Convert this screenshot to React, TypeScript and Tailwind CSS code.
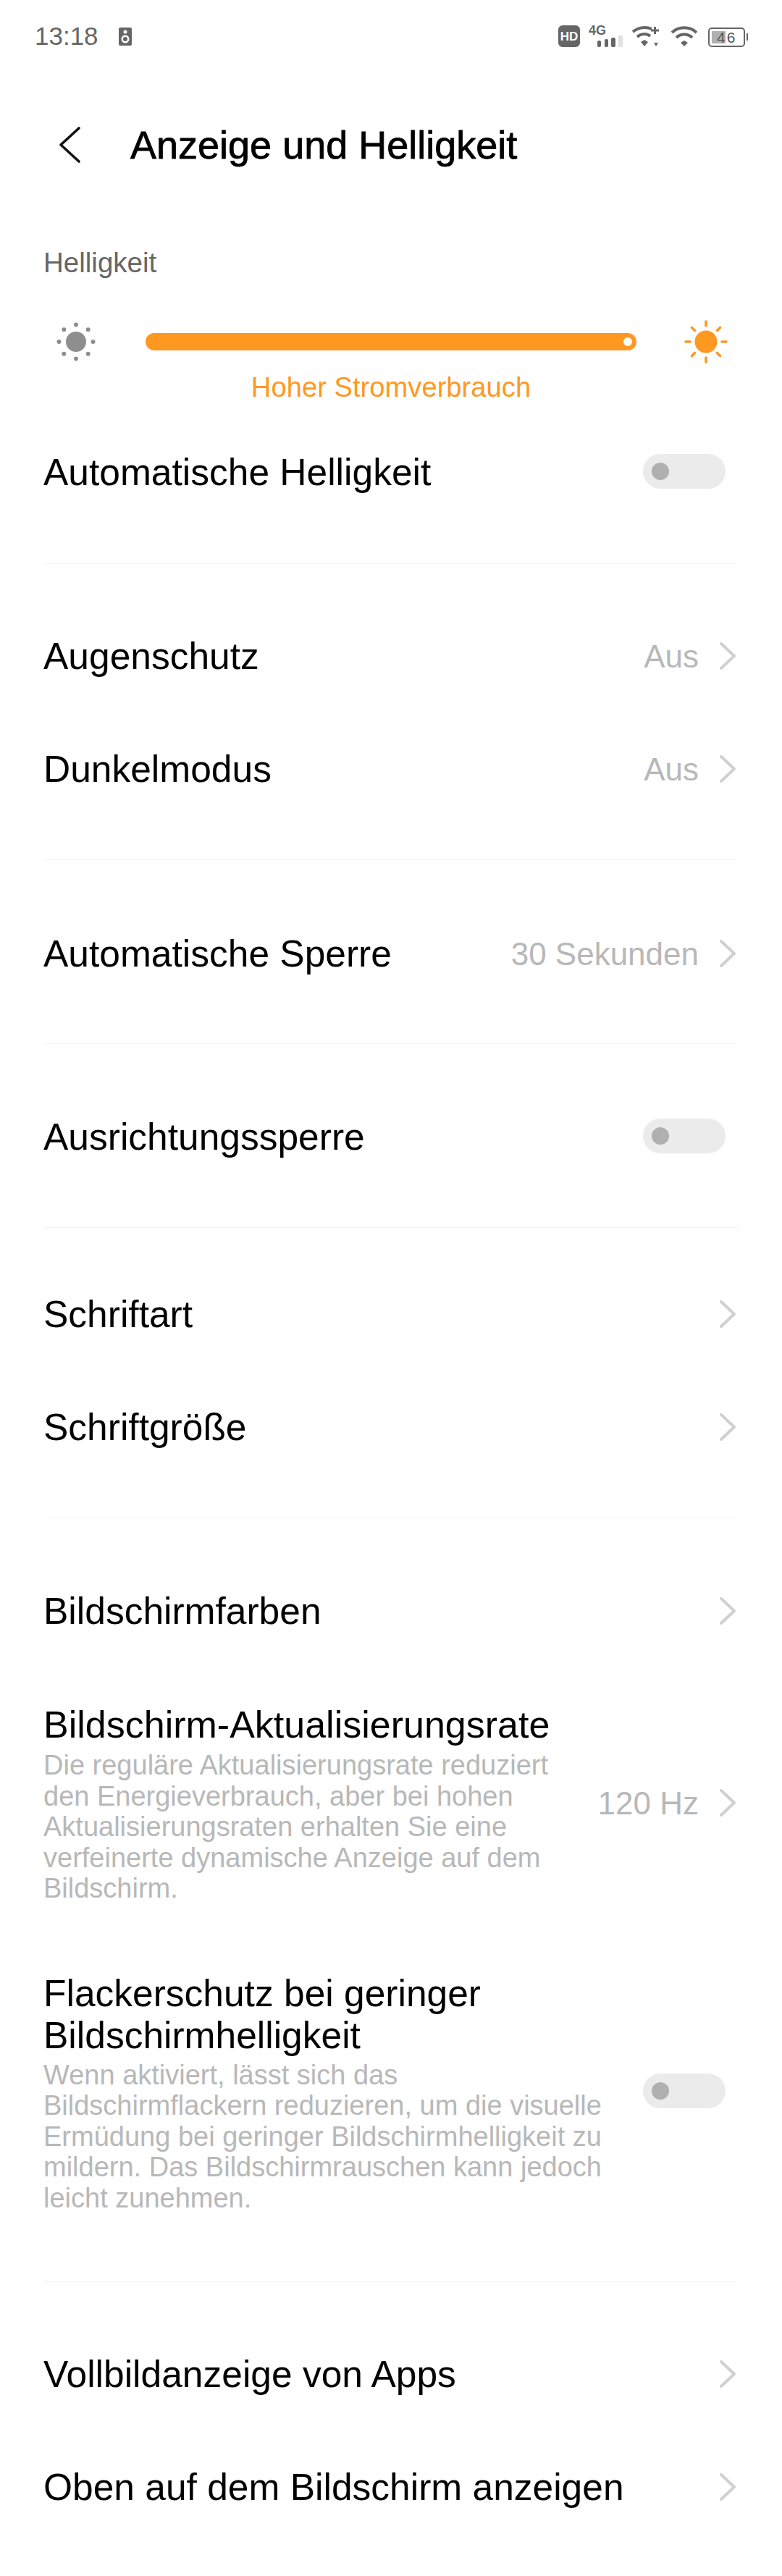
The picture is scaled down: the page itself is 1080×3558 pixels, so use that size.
import React from "react";

const Chevron = () => (
  <svg width="22" height="38" viewBox="0 0 22 38" fill="none" className="mr-[4px] mb-[2px] shrink-0">
    <path d="M2 2 L20 19 L2 36" stroke="#d0d0d0" strokeWidth="4" strokeLinecap="round" strokeLinejoin="round" />
  </svg>
);

const Toggle = () => (
  <div className="mb-1 mr-[18px] flex h-12 w-[114px] shrink-0 items-center rounded-full bg-[#ebebeb] pl-3">
    <div className="h-6 w-6 rounded-full bg-[#b0b0b0]" />
  </div>
);

const Divider = () => <div className="h-px bg-[#f4f4f4]" />;

function Row({ title, value, chevron = true, toggle = false }: { title: string; value?: string; chevron?: boolean; toggle?: boolean }) {
  return (
    <div className="flex h-[156px] items-center justify-between">
      <span className="text-[51.5px] text-black">{title}</span>
      {toggle ? (
        <Toggle />
      ) : (
        chevron && (
          <div className="flex items-center gap-[29px]">
            {value && <span className="text-[44px] text-[#b8b8b8]">{value}</span>}
            <Chevron />
          </div>
        )
      )}
    </div>
  );
}

const SunGray = () => (
  <svg width="54" height="54" viewBox="0 0 54 54" className="shrink-0">
    <circle cx="27" cy="27" r="14" fill="#8e8e8e" />
    {[[27, 3.5], [27, 50.5], [3.5, 27], [50.5, 27], [10.3, 10.3], [43.7, 10.3], [10.3, 43.7], [43.7, 43.7]].map(([x, y], i) => (
      <circle key={i} cx={x} cy={y} r="3" fill="#8e8e8e" />
    ))}
  </svg>
);

const SunOrange = () => (
  <svg width="60" height="60" viewBox="0 0 60 60" className="shrink-0">
    <circle cx="30" cy="30" r="15.5" fill="#ff9820" />
    <g stroke="#ff9820" strokeWidth="3.6" strokeLinecap="round">
      <path d="M30 2V8M30 52V58M2 30H8M52 30H58M10.5 10.5L14.5 14.5M49.5 10.5L45.5 14.5M10.5 49.5L14.5 45.5M49.5 49.5L45.5 45.5" />
    </g>
  </svg>
);

const StatusIcons = () => (
  <div className="flex items-center">
    <svg width="30" height="30" viewBox="0 0 30 30" className="mr-[12px] overflow-visible">
      <rect width="30" height="30" rx="6" fill="#666" />
      <text x="15" y="21" textAnchor="middle" fontSize="17" fontWeight="700" fill="#fff" fontFamily="Liberation Sans">HD</text>
    </svg>
    <div className="relative mr-[12px] h-[30px] w-[48px]">
      <span className="absolute left-0 top-[-3px] text-[18px] font-bold leading-[20px] text-[#666]">4G</span>
      <svg width="48" height="30" viewBox="0 0 48 30" className="absolute left-0 top-0">
        <rect x="12" y="21" width="5" height="9" rx="2" fill="#666" />
        <rect x="22" y="19" width="5" height="11" rx="2" fill="#666" />
        <rect x="31" y="17" width="6" height="13" rx="2" fill="#666" />
        <rect x="41" y="14" width="6" height="16" rx="1" fill="#e0e0e0" />
      </svg>
    </div>
    <svg width="38" height="30" viewBox="0 0 38 30" className="mr-[16px]">
      <g fill="none" stroke="#666" strokeWidth="4">
        <path d="M1 9C9 2 20 2 27 5" />
        <path d="M7 16C12 11 20 11 25 15" />
      </g>
      <path d="M12 23L17 20L22 23L17 29Z" fill="#666" />
      <path d="M26 7H37M31.5 2V12" stroke="#666" strokeWidth="3" />
      <path d="M30 24H36L33 29Z" fill="#666" />
    </svg>
    <svg width="36" height="30" viewBox="0 0 36 30" className="mr-[15px]">
      <g fill="none" stroke="#666" strokeWidth="4">
        <path d="M1 10C10 1 26 1 35 10" />
        <path d="M7 17C13 11 23 11 29 17" />
      </g>
      <path d="M13 24L18 21L23 24L18 29Z" fill="#666" />
    </svg>
    <div className="relative mt-[2px] flex h-[27px] w-[51px] items-center rounded-[5px] border-[2px] border-[#666]">
      <div className="absolute left-[3px] top-[3px] h-[17px] w-[19px] bg-[#b0b0b0]" />
      <span className="relative ml-[10px] text-[21px] font-light leading-none tracking-[2px] text-[#555]">46</span>
      <div className="absolute right-[-6px] top-[6px] h-[10px] w-[2px] bg-[#666]" />
    </div>
  </div>
);

export default function App() {
  return (
    <div className="h-[3558px] w-[1080px] overflow-hidden bg-white font-['Liberation_Sans',Arial,sans-serif]">
      <div className="flex h-[100px] items-center justify-between pl-[48px] pr-[51px]">
        <div className="flex items-center gap-[28px]">
          <span className="text-[35px] text-[#666]">13:18</span>
          <svg width="18" height="25" viewBox="0 0 18 25">
            <rect width="18" height="25" rx="2" fill="#666" />
            <circle cx="9" cy="6" r="2.5" fill="#fff" />
            <circle cx="9" cy="16" r="5.5" fill="#fff" />
            <circle cx="9" cy="16" r="3" fill="#666" />
          </svg>
        </div>
        <StatusIcons />
      </div>

      <div className="flex h-[200px] items-center pl-[81px]">
        <svg width="30" height="50" viewBox="0 0 30 50" fill="none">
          <path d="M28 2L3 25L28 48" stroke="#111" strokeWidth="3.6" strokeLinecap="round" strokeLinejoin="round" />
        </svg>
        <span className="ml-[69px] text-[54px] text-black [-webkit-text-stroke:0.8px_black]">Anzeige und Helligkeit</span>
      </div>

      <div className="px-[60px]">
        <div className="flex h-[124px] items-center pt-[2px] text-[38.5px] text-[#666]">Helligkeit</div>

        <div className="flex h-[96px] items-center">
          <div className="ml-[18px]"><SunGray /></div>
          <div className="relative ml-[69px] h-6 w-[678px] rounded-full bg-[#ff9820]">
            <div className="absolute right-[6px] top-[6px] h-3 w-3 rounded-full bg-white" />
          </div>
          <div className="ml-[66px]"><SunOrange /></div>
        </div>

        <div className="flex h-[26px] items-center justify-center pt-[3px] text-[38.2px] text-[#ff9820]">Hoher Stromverbrauch</div>

        <div className="mt-[29px]"><Row title="Automatische Helligkeit" toggle /></div>
        <div className="mt-[47px]"><Divider /></div>

        <div className="mt-[50px]">
          <Row title="Augenschutz" value="Aus" />
          <Row title="Dunkelmodus" value="Aus" />
        </div>
        <div className="mt-[46px]"><Divider /></div>

        <div className="mt-[52px]"><Row title="Automatische Sperre" value="30 Sekunden" /></div>
        <div className="mt-[45px]"><Divider /></div>

        <div className="mt-[51px]"><Row title="Ausrichtungssperre" toggle /></div>
        <div className="mt-[46px]"><Divider /></div>

        <div className="mt-[42px]">
          <Row title="Schriftart" />
          <Row title="Schriftgröße" />
        </div>
        <div className="mt-[46px]"><Divider /></div>

        <div className="mt-[51px]"><Row title="Bildschirmfarben" /></div>

        <div className="mt-[48px] flex items-center justify-between">
          <div className="w-[712px]">
            <div className="text-[52px] leading-[60px] text-black">Bildschirm-Aktualisierungsrate</div>
            <div className="mt-[5px] text-[38px] leading-[42.5px] text-[#b8b8b8]">
              Die reguläre Aktualisierungsrate reduziert den Energieverbrauch, aber bei hohen Aktualisierungsraten erhalten Sie eine verfeinerte dynamische Anzeige auf dem Bildschirm.
            </div>
          </div>
          <div className="flex items-center gap-[29px]">
            <span className="text-[44px] text-[#b8b8b8]">120 Hz</span>
            <Chevron />
          </div>
        </div>

        <div className="mt-[94px] flex items-center justify-between">
          <div className="w-[790px]">
            <div className="text-[51.5px] leading-[58px] text-black">Flackerschutz bei geringer Bildschirmhelligkeit</div>
            <div className="mt-[5px] text-[38px] leading-[42.5px] text-[#b8b8b8]">
              Wenn aktiviert, lässt sich das Bildschirmflackern reduzieren, um die visuelle Ermüdung bei geringer Bildschirmhelligkeit zu mildern. Das Bildschirmrauschen kann jedoch leicht zunehmen.
            </div>
          </div>
          <Toggle />
        </div>

        <div className="mt-[94px]"><Divider /></div>
        <div className="mt-[50px]">
          <Row title="Vollbildanzeige von Apps" />
          <Row title="Oben auf dem Bildschirm anzeigen" />
        </div>
      </div>
    </div>
  );
}
